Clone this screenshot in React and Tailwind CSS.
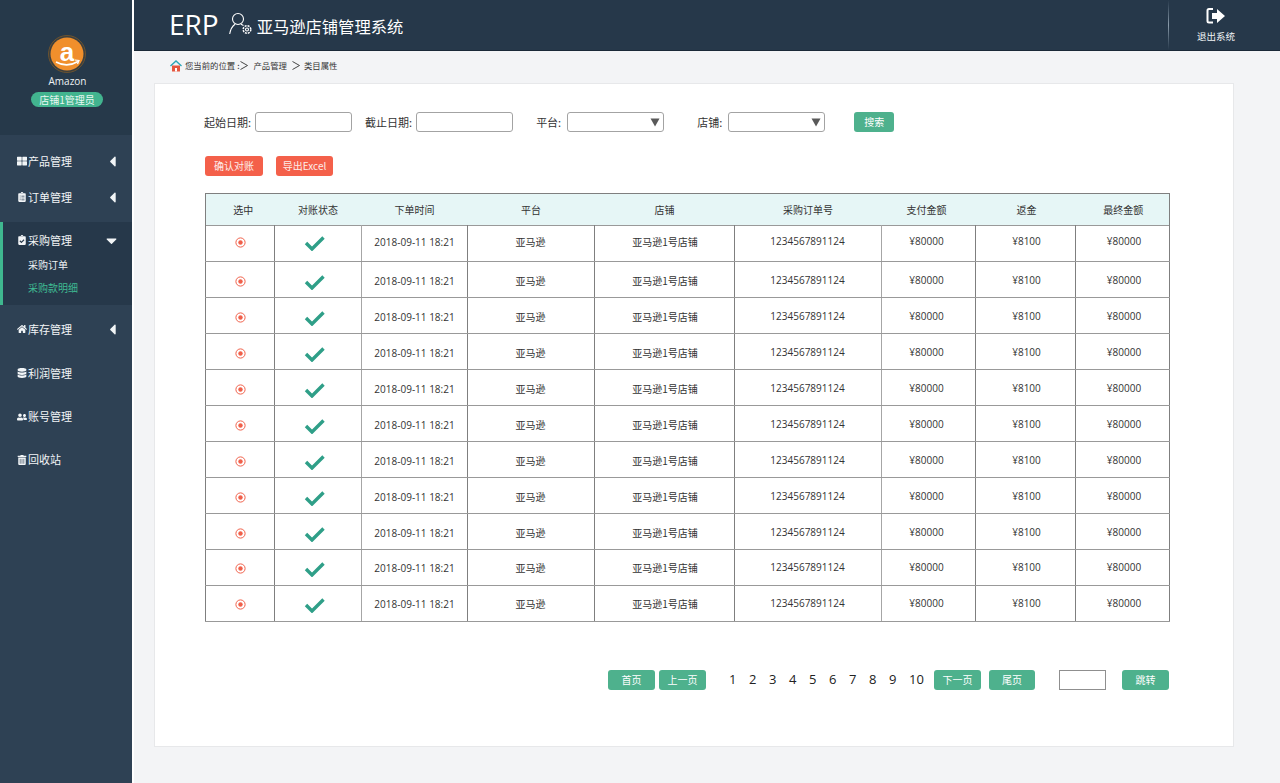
import React from "react";
import { FaThLarge, FaClipboardList, FaClipboardCheck, FaHome, FaDatabase, FaUserFriends, FaTrashAlt, FaCaretLeft, FaCaretDown } from "react-icons/fa";

const font = "font-['Noto_Sans_CJK_SC','Noto_Sans',sans-serif]";

function MenuRow({ icon, label, arrow, className = "" }) {
  return (
    <div className={"flex items-center pr-[15px] text-[#f2f5f7] " + className}>
      <span className="flex w-[13px] justify-center text-[10px]">{icon}</span>
      <span className="text-[11px] leading-none flex-1">{label}</span>
      {arrow === "left" && <FaCaretLeft className="text-[17px] mr-[-4px]" />}
      {arrow === "down" && <FaCaretDown className="text-[17px] mr-[-3px]" />}
    </div>
  );
}

function Sidebar() {
  return (
    <aside className="w-[132px] shrink-0 bg-[#2e4154] flex flex-col">
      <div className="h-[135px] bg-[#26394a] flex flex-col items-center pt-[35px] pl-[3px]">
        <svg className="-ml-[2px]" width="38" height="38" viewBox="0 0 38 38" aria-hidden="true">
          <circle cx="19" cy="19" r="18.5" fill="#3b3f3f" stroke="#6b5330" />
          <circle cx="19" cy="19" r="16.5" fill="#f08f2c" />
          <path d="M8 27 Q19 33 30 26.5" fill="none" stroke="#fff" strokeWidth="1.5" />
          <path d="M27 25 L31 25.5 L29.5 29" fill="none" stroke="#fff" strokeWidth="1.2" />
          <text x="19" y="25.5" textAnchor="middle" fontSize="26" fontWeight="700" fill="#fff" fontFamily="'Liberation Sans',sans-serif">a</text>
        </svg>
        <div className="mt-[1px] text-[10px] leading-[14px] text-[#eef2f4] font-['Open_Sans',sans-serif]">Amazon</div>
        <div className="mt-[4px] -ml-[1px] h-[15px] w-[72px] rounded-full bg-[#42b48f] text-center text-[10px] leading-[15px] text-[#e9f7f2]">店铺1管理员</div>
      </div>
      <MenuRow className="h-[36px] mt-[8px] pl-[15px]" icon={<FaThLarge />} label="产品管理" arrow="left" />
      <MenuRow className="h-[36px] pl-[15px]" icon={<FaClipboardList />} label="订单管理" arrow="left" />
      <div className="mt-[7px] h-[83px] bg-[#26384a] border-l-[3px] border-[#3fb78f] pt-[1px]">
        <MenuRow className="h-[34px] pl-[12px]" icon={<FaClipboardCheck />} label="采购管理" arrow="down" />
        <div className="pl-[25px] text-[10px] leading-[23px] text-[#eef2f4]">
          <div className="-mt-[4px]">采购订单</div>
          <div className="text-[#3fbb92]">采购款明细</div>
        </div>
      </div>
      <MenuRow className="h-[44px] mt-[2px] pl-[15px]" icon={<FaHome />} label="库存管理" arrow="left" />
      <MenuRow className="h-[44px] pl-[15px]" icon={<FaDatabase />} label="利润管理" />
      <MenuRow className="h-[43px] pl-[15px]" icon={<FaUserFriends />} label="账号管理" />
      <MenuRow className="h-[43px] pl-[15px]" icon={<FaTrashAlt />} label="回收站" />
    </aside>
  );
}

function Header() {
  return (
    <header className="h-[51px] bg-[#26384a] border-b-[1px] border-[#1a2937] flex items-center pl-[35px] text-white">
      <span className="font-['Open_Sans',sans-serif] text-[28px] font-medium leading-none -mt-[2px]">ERP</span>
      <svg className="ml-[10px] -mt-[2px]" width="24" height="24" viewBox="0 0 24 24" fill="none" stroke="#fff" strokeWidth="1.1" aria-hidden="true">
        <circle cx="9" cy="7" r="5.5" />
        <path d="M0.7 22 C1.5 17 3.5 14 6 12.2 M12 12.2 L14.5 13.5" />
        <circle cx="18" cy="17.5" r="1.5" />
        <circle cx="18" cy="17.5" r="3.8" strokeDasharray="2 1" strokeWidth="1.5" />
      </svg>
      <span className="ml-[4px] text-[16.3px] leading-none mt-[3px]">亚马逊店铺管理系统</span>
      <div className="ml-auto flex h-full items-stretch">
        <div className="w-[1px] bg-gradient-to-b from-[#26384a] via-[#8b9cab] to-[#26384a]" />
        <div className="w-[111px] flex flex-col items-center pt-[7px] pr-[17px]">
          <svg width="20" height="18" viewBox="0 0 20 18" aria-hidden="true">
            <path d="M7 2 H3 Q1.5 2 1.5 3.5 V14 Q1.5 15.5 3 15.5 H7" fill="none" stroke="#fff" strokeWidth="2" />
            <path d="M6 6 H11 V2 L19 9 L11 16 V12 H6 Z" fill="#fff" />
          </svg>
          <span className="mt-[4px] text-[9.5px] leading-[14px] text-[#f2f5f7]">退出系统</span>
        </div>
      </div>
    </header>
  );
}

function Chevron({ className = "" }) {
  return (
    <svg className={className} width="8" height="9" viewBox="0 0 8 9" fill="none" stroke="#333" strokeWidth="0.9" aria-hidden="true">
      <path d="M0.5 0.5 L7.5 4.5 L0.5 8.5" />
    </svg>
  );
}

function Crumb() {
  return (
    <div className="h-[32px] flex items-center pl-[36px] pb-[3px] text-[8.4px] text-[#333]">
      <svg width="12" height="12" viewBox="0 0 12 12" aria-hidden="true">
        <path d="M0.5 6 L6 1 L11.5 6" fill="none" stroke="#2ba7b8" strokeWidth="1.4" />
        <rect x="2" y="5.5" width="8" height="6" fill="#e5573f" />
        <rect x="5" y="8" width="2" height="3.5" fill="#fff" />
      </svg>
      <span className="ml-[3px]">您当前的位置 :</span>
      <Chevron className="ml-[1px]" />
      <span className="ml-[5px]">产品管理</span>
      <Chevron className="ml-[5px]" />
      <span className="ml-[4px]">类目属性</span>
    </div>
  );
}

function Field({ label, className = "" }) {
  return (
    <label className={"flex items-center gap-[4px] text-[11px] text-[#333] " + className}>
      <span>{label}</span>
      <input className="h-[20px] w-[97px] rounded-[3px] border border-[#a3a3a3] bg-white" />
    </label>
  );
}

function SelectField({ label, className = "" }) {
  return (
    <div className={"flex items-center gap-[6px] text-[11px] text-[#333] " + className}>
      <span>{label}</span>
      <div className="relative h-[20px] w-[97px] rounded-[3px] border border-[#a3a3a3] bg-white">
        <svg className="absolute right-[3px] top-[5px]" width="10" height="9" viewBox="0 0 10 9" aria-hidden="true">
          <path d="M0.5 0.5 H9.5 L5 8.5 Z" fill="#595959" />
        </svg>
      </div>
    </div>
  );
}

function GreenBtn({ children, className = "" }) {
  return (
    <button className={"h-[20px] rounded-[3px] bg-[#4eb18d] text-[10px] leading-[20px] text-white " + className}>
      {children}
    </button>
  );
}

function RedBtn({ children, className = "" }) {
  return (
    <button className={"h-[20px] rounded-[3px] bg-[#f4604a] text-[10px] leading-[20px] text-[#fdeeeb] " + className}>
      {children}
    </button>
  );
}

const headers = [
  ["选中", "pl-[6px]"],
  ["对账状态", ""],
  ["下单时间", ""],
  ["平台", ""],
  ["店铺", ""],
  ["采购订单号", ""],
  ["支付金额", "pr-[4px]"],
  ["返金", "pl-[2px]"],
  ["最终金额", "pl-[2px]"],
];
const rowPads = ["pb-[2px]", "pt-[4px]", "pt-[4px]", "pt-[4px]", "pt-[4px]", "pt-[4px]", "pt-[4px]", "pt-[4px]", "pt-[4px]", "pt-[2px]", "pt-[2px]"];

function DataTable() {
  const td = "border border-y-[#999999] border-x-[#7f7f7f] px-0 text-center align-middle text-[10px] text-[#333] ";
  const num = "font-['Open_Sans',sans-serif] ";
  return (
    <table className="ml-[50px] mt-[17px] w-[964px] table-fixed border-collapse">
      <colgroup>
        <col className="w-[69px]" />
        <col className="w-[87px]" />
        <col className="w-[106px]" />
        <col className="w-[127px]" />
        <col className="w-[140px]" />
        <col className="w-[147px]" />
        <col className="w-[94px]" />
        <col className="w-[100px]" />
        <col className="w-[94px]" />
      </colgroup>
      <thead>
        <tr className="h-[32px] bg-[#e6f6f6] border border-[#7f7f7f]">
          {headers.map(([h, pad]) => (
            <th key={h} className={"p-0 text-center text-[10px] font-normal text-[#333] " + pad}>{h}</th>
          ))}
        </tr>
      </thead>
      <tbody>
        {rowPads.map((pad, i) => (
          <tr key={i} className="h-[36px]">
            <td className={td + pad}>
              <svg className="mx-auto" width="11" height="11" viewBox="0 0 11 11" aria-hidden="true">
                <circle cx="5.5" cy="5.5" r="4.6" fill="none" stroke="#f0604a" strokeWidth="1" />
                <circle cx="5.5" cy="5.5" r="2.2" fill="#f0604a" />
              </svg>
            </td>
            <td className={td + "border-r-[#a6a6a6] pr-[7px] " + pad}>
              <svg className="mx-auto" width="21" height="16" viewBox="0 0 21 16" aria-hidden="true">
                <path d="M2 8 L8 14 L19.5 2.5" fill="none" stroke="#2f9f88" strokeWidth="3.4" />
              </svg>
            </td>
            <td className={td + num + "text-[10.5px] " + pad}>2018-09-11 18:21</td>
            <td className={td + "pr-[1px] " + pad}><div className="-mt-[2px]">亚马逊</div></td>
            <td className={td + "pl-[1px] " + pad}><div className="-mt-[2px]">亚马逊1号店铺</div></td>
            <td className={td + num + "border-r-[#a6a6a6] pr-[1px] text-[10.3px] " + pad}><div className="-mt-[2px]">1234567891124</div></td>
            <td className={td + num + "pr-[4px] " + pad}><div className="-mt-[2px]">¥80000</div></td>
            <td className={td + num + "pl-[2px] " + pad}><div className="-mt-[2px]">¥8100</div></td>
            <td className={td + num + "pl-[3px] " + pad}><div className="-mt-[2px]">¥80000</div></td>
          </tr>
        ))}
      </tbody>
    </table>
  );
}

function Pager() {
  return (
    <div className="mt-[48px] ml-[453px] flex items-center">
      <GreenBtn className="w-[47px]">首页</GreenBtn>
      <GreenBtn className="ml-[4px] w-[47px]">上一页</GreenBtn>
      <div className="ml-[18px] flex w-[205px] items-center justify-between text-[13px] text-[#222] font-['Open_Sans',sans-serif] px-[5px]">
        {[1, 2, 3, 4, 5, 6, 7, 8, 9, 10].map((n) => <span key={n}>{n}</span>)}
      </div>
      <GreenBtn className="ml-[5px] w-[47px]">下一页</GreenBtn>
      <GreenBtn className="ml-[8px] w-[46px]">尾页</GreenBtn>
      <input className="ml-[24px] h-[20px] w-[47px] border border-[#8f8f8f] bg-white" />
      <GreenBtn className="ml-[16px] w-[47px]">跳转</GreenBtn>
    </div>
  );
}

export default function App() {
  return (
    <div className={"flex h-[783px] w-[1280px] overflow-hidden bg-[#f3f4f6] " + font}>
      <Sidebar />
      <div className="w-[2px] bg-white" />
      <main className="flex-1 flex flex-col">
        <Header />
        <Crumb />
        <section className="ml-[20px] h-[664px] w-[1080px] border border-[#e7e8ea] bg-white">
          <div className="flex items-center pl-[49px] pt-[28px]">
            <Field label="起始日期:" />
            <Field className="ml-[13px]" label="截止日期:" />
            <SelectField className="ml-[23px]" label="平台:" />
            <SelectField className="ml-[33px]" label="店铺:" />
            <GreenBtn className="ml-[29px] w-[40px]">搜索</GreenBtn>
          </div>
          <div className="ml-[50px] mt-[24px] flex gap-[13px]">
            <RedBtn className="w-[58px]">确认对账</RedBtn>
            <RedBtn className="w-[57px]">导出Excel</RedBtn>
          </div>
          <DataTable />
          <Pager />
        </section>
      </main>
    </div>
  );
}
